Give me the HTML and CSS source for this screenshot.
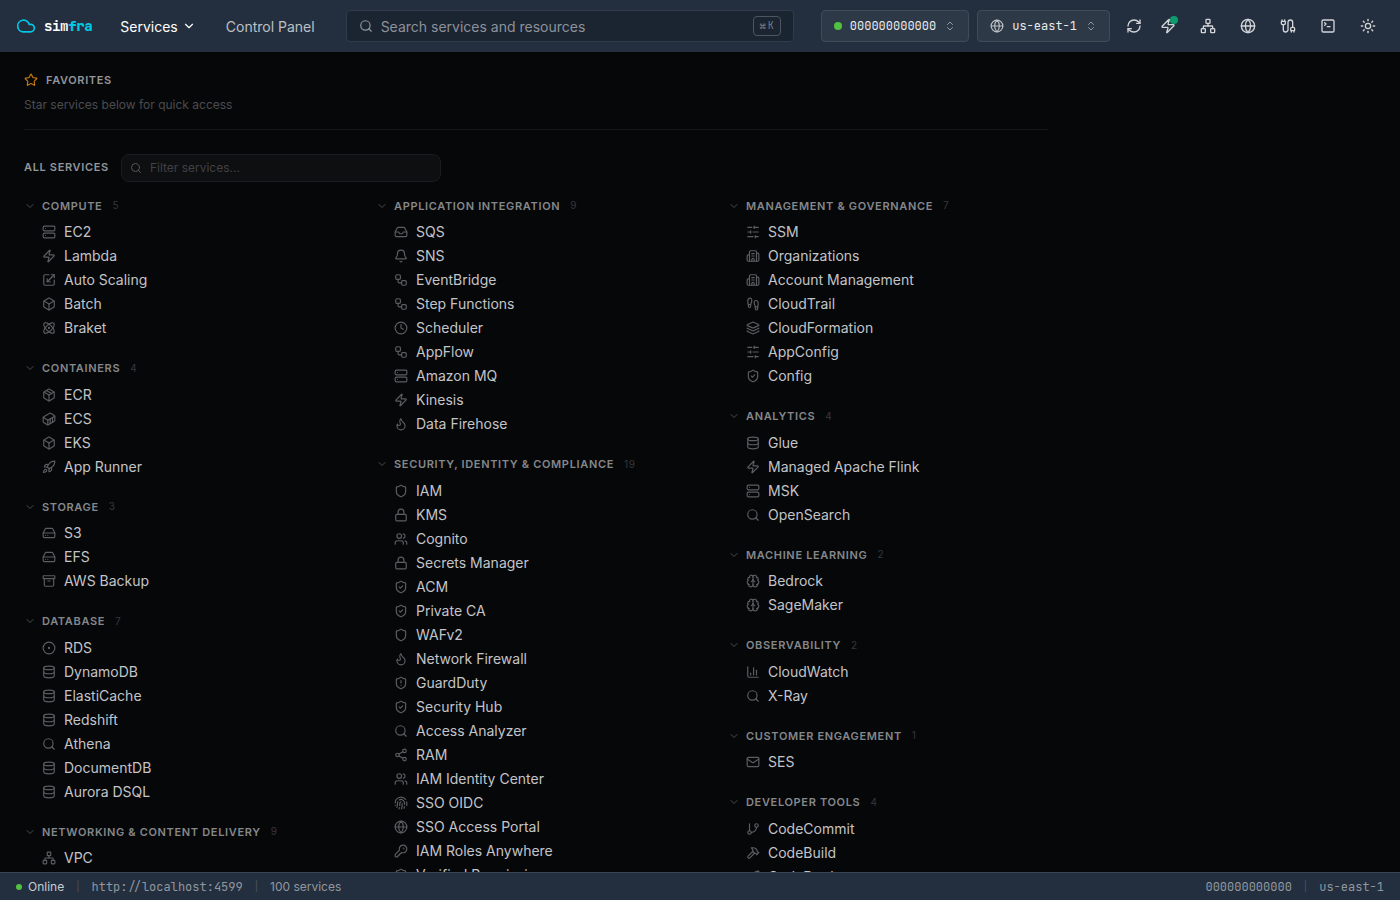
FILE: index.html
```html
<!DOCTYPE html>
<html lang="en">
<head>
<meta charset="UTF-8">
<meta name="viewport" content="width=device-width, initial-scale=1.0">
<title>simfra - Services</title>
<link rel="stylesheet" href="styles.css">
</head>
<body>
    <!-- icon sprite -->
    <svg class="sprite" aria-hidden="true">
        <symbol id="cloud" viewBox="0 0 24 24"><path d="M17.5 19H9a7 7 0 1 1 6.71-9h1.79a4.5 4.5 0 1 1 0 9Z"/></symbol>
        <symbol id="star" viewBox="0 0 24 24"><path d="M11.525 2.295a.53.53 0 0 1 .95 0l2.31 4.679a2.123 2.123 0 0 0 1.595 1.16l5.166.756a.53.53 0 0 1 .294.904l-3.736 3.638a2.123 2.123 0 0 0-.611 1.878l.882 5.14a.53.53 0 0 1-.771.56l-4.618-2.428a2.122 2.122 0 0 0-1.973 0L6.396 21.01a.53.53 0 0 1-.77-.56l.881-5.139a2.122 2.122 0 0 0-.611-1.879L2.16 9.795a.53.53 0 0 1 .294-.906l5.165-.755a2.122 2.122 0 0 0 1.597-1.16z"/></symbol>
        <symbol id="chevron" viewBox="0 0 24 24"><path d="m6 9 6 6 6-6"/></symbol>
        <symbol id="up-down" viewBox="0 0 24 24"><path d="m7 15 5 5 5-5"/><path d="m7 9 5-5 5 5"/></symbol>
        <symbol id="search" viewBox="0 0 24 24"><circle cx="11" cy="11" r="8"/><path d="m21 21-4.3-4.3"/></symbol>
        <symbol id="globe" viewBox="0 0 24 24"><circle cx="12" cy="12" r="10"/><path d="M12 2a14.5 14.5 0 0 0 0 20 14.5 14.5 0 0 0 0-20"/><path d="M2 12h20"/></symbol>
        <symbol id="refresh" viewBox="0 0 24 24"><path d="M3 12a9 9 0 0 1 9-9 9.75 9.75 0 0 1 6.74 2.74L21 8"/><path d="M21 3v5h-5"/><path d="M21 12a9 9 0 0 1-9 9 9.75 9.75 0 0 1-6.74-2.74L3 16"/><path d="M8 16H3v5"/></symbol>
        <symbol id="zap" viewBox="0 0 24 24"><path d="M4 14a1 1 0 0 1-.78-1.63l9.9-10.2a.5.5 0 0 1 .86.46l-1.92 6.02A1 1 0 0 0 13 10h7a1 1 0 0 1 .78 1.63l-9.9 10.2a.5.5 0 0 1-.86-.46l1.92-6.02A1 1 0 0 0 11 14z"/></symbol>
        <symbol id="network" viewBox="0 0 24 24"><rect x="16" y="16" width="6" height="6" rx="1"/><rect x="2" y="16" width="6" height="6" rx="1"/><rect x="9" y="2" width="6" height="6" rx="1"/><path d="M5 16v-3a1 1 0 0 1 1-1h12a1 1 0 0 1 1 1v3"/><path d="M12 12V8"/></symbol>
        <symbol id="cable" viewBox="0 0 24 24"><path d="M17 19a1 1 0 0 1-1-1v-2a2 2 0 0 1 2-2h2a2 2 0 0 1 2 2v2a1 1 0 0 1-1 1z"/><path d="M17 21v-2"/><path d="M19 14V6.5a1 1 0 0 0-7 0v11a1 1 0 0 1-7 0V10"/><path d="M21 21v-2"/><path d="M3 5V3"/><path d="M4 10a2 2 0 0 1-2-2V6a1 1 0 0 1 1-1h4a1 1 0 0 1 1 1v2a2 2 0 0 1-2 2z"/><path d="M7 5V3"/></symbol>
        <symbol id="terminal" viewBox="0 0 24 24"><path d="m7 11 2-2-2-2"/><path d="M11 13h4"/><rect x="3" y="3" width="18" height="18" rx="2"/></symbol>
        <symbol id="sun" viewBox="0 0 24 24"><circle cx="12" cy="12" r="4"/><path d="M12 2v2"/><path d="M12 20v2"/><path d="m4.93 4.93 1.41 1.41"/><path d="m17.66 17.66 1.41 1.41"/><path d="M2 12h2"/><path d="M20 12h2"/><path d="m6.34 17.66-1.41 1.41"/><path d="m19.07 4.93-1.41 1.41"/></symbol>
        <symbol id="server" viewBox="0 0 24 24"><rect x="2" y="2" width="20" height="8" rx="2"/><rect x="2" y="14" width="20" height="8" rx="2"/><path d="M6 6h.01"/><path d="M6 18h.01"/></symbol>
        <symbol id="scaling" viewBox="0 0 24 24"><path d="M12 3H5a2 2 0 0 0-2 2v14a2 2 0 0 0 2 2h14a2 2 0 0 0 2-2v-7"/><path d="M14 15H9v-5"/><path d="M16 3h5v5"/><path d="M21 3 9 15"/></symbol>
        <symbol id="box" viewBox="0 0 24 24"><path d="M21 8a2 2 0 0 0-1-1.73l-7-4a2 2 0 0 0-2 0l-7 4A2 2 0 0 0 3 8v8a2 2 0 0 0 1 1.73l7 4a2 2 0 0 0 2 0l7-4A2 2 0 0 0 21 16Z"/><path d="m3.3 7 8.7 5 8.7-5"/><path d="M12 22V12"/></symbol>
        <symbol id="package" viewBox="0 0 24 24"><path d="M11 21.73a2 2 0 0 0 2 0l7-4A2 2 0 0 0 21 16V8a2 2 0 0 0-1-1.73l-7-4a2 2 0 0 0-2 0l-7 4A2 2 0 0 0 3 8v8a2 2 0 0 0 1 1.73z"/><path d="M12 22V12"/><path d="M3.29 7 12 12l8.71-5"/><path d="m7.5 4.27 9 5.15"/></symbol>
        <symbol id="atom" viewBox="0 0 24 24"><circle cx="12" cy="12" r="1"/><path d="M20.2 20.2c2.04-2.03.02-7.36-4.5-11.9-4.54-4.52-9.87-6.54-11.9-4.5-2.04 2.03-.02 7.36 4.5 11.9 4.54 4.52 9.87 6.54 11.9 4.5Z"/><path d="M15.7 15.7c4.52-4.54 6.54-9.87 4.5-11.9-2.03-2.04-7.36-.02-11.9 4.5-4.52 4.54-6.54 9.87-4.5 11.9 2.03 2.04 7.36.02 11.9-4.5Z"/></symbol>
        <symbol id="container" viewBox="0 0 24 24"><path d="M22 7.7c0-.6-.4-1.2-.8-1.5l-6.3-3.9a1.72 1.72 0 0 0-1.7 0l-10.3 6c-.5.2-.9.8-.9 1.4v6.6c0 .5.4 1.2.8 1.5l6.3 3.9a1.72 1.72 0 0 0 1.7 0l10.3-6c.5-.3.9-1 .9-1.5Z"/><path d="M10 21.9V14L2.1 9.1"/><path d="m10 14 11.9-6.9"/><path d="M14 19.8v-8.1"/><path d="M18 17.5V9.4"/></symbol>
        <symbol id="rocket" viewBox="0 0 24 24"><path d="M4.5 16.5c-1.5 1.26-2 5-2 5s3.74-.5 5-2c.71-.84.7-2.13-.09-2.91a2.18 2.18 0 0 0-2.91-.09z"/><path d="m12 15-3-3a22 22 0 0 1 2-3.95A12.88 12.88 0 0 1 22 2c0 2.72-.78 7.5-6 11a22.35 22.35 0 0 1-4 2z"/><path d="M9 12H4s.55-3.03 2-4c1.62-1.08 5 0 5 0"/><path d="M12 15v5s3.03-.55 4-2c1.08-1.62 0-5 0-5"/></symbol>
        <symbol id="drive" viewBox="0 0 24 24"><path d="M22 12H2"/><path d="M5.45 5.11 2 12v6a2 2 0 0 0 2 2h16a2 2 0 0 0 2-2v-6l-3.45-6.89A2 2 0 0 0 16.76 4H7.24a2 2 0 0 0-1.79 1.11z"/><path d="M6 16h.01"/><path d="M10 16h.01"/></symbol>
        <symbol id="archive" viewBox="0 0 24 24"><rect x="2" y="3" width="20" height="5" rx="1"/><path d="M4 8v11a2 2 0 0 0 2 2h12a2 2 0 0 0 2-2V8"/><path d="M10 12h4"/></symbol>
        <symbol id="circle-dot" viewBox="0 0 24 24"><circle cx="12" cy="12" r="10"/><circle cx="12" cy="12" r="1"/></symbol>
        <symbol id="database" viewBox="0 0 24 24"><ellipse cx="12" cy="5" rx="9" ry="3"/><path d="M3 5V19A9 3 0 0 0 21 19V5"/><path d="M3 12A9 3 0 0 0 21 12"/></symbol>
        <symbol id="inbox" viewBox="0 0 24 24"><path d="M22 12h-6l-2 3h-4l-2-3H2"/><path d="M5.45 5.11 2 12v6a2 2 0 0 0 2 2h16a2 2 0 0 0 2-2v-6l-3.45-6.89A2 2 0 0 0 16.76 4H7.24a2 2 0 0 0-1.79 1.11z"/></symbol>
        <symbol id="bell" viewBox="0 0 24 24"><path d="M10.268 21a2 2 0 0 0 3.464 0"/><path d="M3.262 15.326A1 1 0 0 0 4 17h16a1 1 0 0 0 .74-1.673C19.41 13.956 18 12.499 18 8A6 6 0 0 0 6 8c0 4.499-1.411 5.956-2.738 7.326"/></symbol>
        <symbol id="workflow" viewBox="0 0 24 24"><rect x="3" y="3" width="8" height="8" rx="2"/><path d="M7 11v4a2 2 0 0 0 2 2h4"/><rect x="13" y="13" width="8" height="8" rx="2"/></symbol>
        <symbol id="clock" viewBox="0 0 24 24"><circle cx="12" cy="12" r="10"/><path d="M12 6v6l4 2"/></symbol>
        <symbol id="flame" viewBox="0 0 24 24"><path d="M8.5 14.5A2.5 2.5 0 0 0 11 12c0-1.38-.5-2-1-3-1.072-2.143-.224-4.054 2-6 .5 2.5 2 4.9 4 6.5 2 1.6 3 3.5 3 5.5a7 7 0 1 1-14 0c0-1.153.433-2.294 1-3a2.5 2.5 0 0 0 2.5 2.5z"/></symbol>
        <symbol id="shield" viewBox="0 0 24 24"><path d="M20 13c0 5-3.5 7.5-7.66 8.95a1 1 0 0 1-.67-.01C7.5 20.5 4 18 4 13V6a1 1 0 0 1 1-1c2 0 4.5-1.2 6.24-2.72a1.17 1.17 0 0 1 1.52 0C14.51 3.81 17 5 19 5a1 1 0 0 1 1 1z"/></symbol>
        <symbol id="shield-check" viewBox="0 0 24 24"><path d="M20 13c0 5-3.5 7.5-7.66 8.95a1 1 0 0 1-.67-.01C7.5 20.5 4 18 4 13V6a1 1 0 0 1 1-1c2 0 4.5-1.2 6.24-2.72a1.17 1.17 0 0 1 1.52 0C14.51 3.81 17 5 19 5a1 1 0 0 1 1 1z"/><path d="m9 12 2 2 4-4"/></symbol>
        <symbol id="shield-alert" viewBox="0 0 24 24"><path d="M20 13c0 5-3.5 7.5-7.66 8.95a1 1 0 0 1-.67-.01C7.5 20.5 4 18 4 13V6a1 1 0 0 1 1-1c2 0 4.5-1.2 6.24-2.72a1.17 1.17 0 0 1 1.52 0C14.51 3.81 17 5 19 5a1 1 0 0 1 1 1z"/><path d="M12 8v4"/><path d="M12 16h.01"/></symbol>
        <symbol id="lock" viewBox="0 0 24 24"><rect x="3" y="11" width="18" height="11" rx="2"/><path d="M7 11V7a5 5 0 0 1 10 0v4"/></symbol>
        <symbol id="users" viewBox="0 0 24 24"><path d="M16 21v-2a4 4 0 0 0-4-4H6a4 4 0 0 0-4 4v2"/><path d="M16 3.128a4 4 0 0 1 0 7.744"/><path d="M22 21v-2a4 4 0 0 0-3-3.87"/><circle cx="9" cy="7" r="4"/></symbol>
        <symbol id="share" viewBox="0 0 24 24"><circle cx="18" cy="5" r="3"/><circle cx="6" cy="12" r="3"/><circle cx="18" cy="19" r="3"/><path d="m8.59 13.51 6.83 3.98"/><path d="m15.41 6.51-6.82 3.98"/></symbol>
        <symbol id="fingerprint" viewBox="0 0 24 24"><path d="M12 10a2 2 0 0 0-2 2c0 1.02-.1 2.51-.26 4"/><path d="M14 13.12c0 2.38 0 6.38-1 8.88"/><path d="M17.29 21.02c.12-.6.43-2.3.5-3.02"/><path d="M2 12a10 10 0 0 1 18-6"/><path d="M2 16h.01"/><path d="M21.8 16c.2-2 .131-5.354 0-6"/><path d="M5 19.5C5.5 18 6 15 6 12a6 6 0 0 1 .34-2"/><path d="M8.65 22c.21-.66.45-1.32.57-2"/><path d="M9 6.8a6 6 0 0 1 9 5.2v2"/></symbol>
        <symbol id="key" viewBox="0 0 24 24"><path d="M2.586 17.414A2 2 0 0 0 2 18.828V21a1 1 0 0 0 1 1h3a1 1 0 0 0 1-1v-1a1 1 0 0 1 1-1h1a1 1 0 0 0 1-1v-1a1 1 0 0 1 1-1h.172a2 2 0 0 0 1.414-.586l.814-.814a6.5 6.5 0 1 0-4-4z"/><circle cx="16.5" cy="7.5" r=".5"/></symbol>
        <symbol id="sliders" viewBox="0 0 24 24"><path d="M21 4h-7"/><path d="M10 4H3"/><path d="M21 12h-9"/><path d="M8 12H3"/><path d="M21 20h-5"/><path d="M12 20H3"/><path d="M14 2v4"/><path d="M8 10v4"/><path d="M16 18v4"/></symbol>
        <symbol id="building" viewBox="0 0 24 24"><path d="M10 12h4"/><path d="M10 8h4"/><path d="M14 21v-3a2 2 0 0 0-4 0v3"/><path d="M6 10H4a2 2 0 0 0-2 2v7a2 2 0 0 0 2 2h16a2 2 0 0 0 2-2V9a2 2 0 0 0-2-2h-2"/><path d="M6 21V5a2 2 0 0 1 2-2h8a2 2 0 0 1 2 2v16"/></symbol>
        <symbol id="footprints" viewBox="0 0 24 24"><path d="M4 16v-2.38C4 11.5 2.97 10.5 3 8c.03-2.72 1.49-6 4.5-6C9.37 2 10 3.8 10 5.5c0 3.11-2 5.66-2 8.68V16a2 2 0 1 1-4 0Z"/><path d="M20 20v-2.38c0-2.12 1.03-3.12 1-5.62-.03-2.72-1.49-6-4.5-6C14.63 6 14 7.8 14 9.5c0 3.11 2 5.66 2 8.68V20a2 2 0 1 0 4 0Z"/><path d="M16 17h4"/><path d="M4 13h4"/></symbol>
        <symbol id="layers" viewBox="0 0 24 24"><path d="M12.83 2.18a2 2 0 0 0-1.66 0L2.6 6.08a1 1 0 0 0 0 1.83l8.58 3.91a2 2 0 0 0 1.66 0l8.58-3.9a1 1 0 0 0 0-1.83z"/><path d="M2 12a1 1 0 0 0 .58.91l8.6 3.91a2 2 0 0 0 1.65 0l8.58-3.9A1 1 0 0 0 22 12"/><path d="M2 17a1 1 0 0 0 .58.91l8.6 3.91a2 2 0 0 0 1.65 0l8.58-3.9A1 1 0 0 0 22 17"/></symbol>
        <symbol id="brain" viewBox="0 0 24 24"><path d="M12 18V5"/><path d="M15 13a4.17 4.17 0 0 1-3-4 4.17 4.17 0 0 1-3 4"/><path d="M17.598 6.5A3 3 0 1 0 12 5a3 3 0 1 0-5.598 1.5"/><path d="M17.997 5.125a4 4 0 0 1 2.526 5.77"/><path d="M18 18a4 4 0 0 0 2-7.464"/><path d="M19.967 17.483A4 4 0 1 1 12 18a4 4 0 1 1-7.967-.517"/><path d="M6 18a4 4 0 0 1-2-7.464"/><path d="M6.003 5.125a4 4 0 0 0-2.526 5.77"/></symbol>
        <symbol id="chart" viewBox="0 0 24 24"><path d="M3 3v16a2 2 0 0 0 2 2h16"/><path d="M18 17V9"/><path d="M13 17V5"/><path d="M8 17v-3"/></symbol>
        <symbol id="mail" viewBox="0 0 24 24"><path d="m22 7-8.991 5.727a2 2 0 0 1-2.009 0L2 7"/><rect x="2" y="4" width="20" height="16" rx="2"/></symbol>
        <symbol id="git-branch" viewBox="0 0 24 24"><path d="M6 3v12"/><circle cx="18" cy="6" r="3"/><circle cx="6" cy="18" r="3"/><path d="M18 9a9 9 0 0 1-9 9"/></symbol>
        <symbol id="hammer" viewBox="0 0 24 24"><path d="m15 12-8.373 8.373a1 1 0 1 1-3-3L12 9"/><path d="m18 15 4-4"/><path d="m21.5 11.5-1.914-1.914A2 2 0 0 1 19 8.172V7l-2.26-2.26a6 6 0 0 0-4.202-1.756L9 2.96l.92.82A6.18 6.18 0 0 1 12 8.4V10l2 2h1.172a2 2 0 0 1 1.414.586L18.5 14.5"/></symbol>
    </svg>

    <header class="topbar">
        <a class="logo" href="#"><svg class="icon icon-20"><use href="#cloud"/></svg><span>sim<b>fra</b></span></a>
        <nav class="nav">
            <button class="nav-item active" type="button">Services <svg class="icon icon-14"><use href="#chevron"/></svg></button>
            <a class="nav-item" href="#">Control Panel</a>
        </nav>
        <div class="search">
            <svg class="icon icon-14"><use href="#search"/></svg>
            <input type="search" placeholder="Search services and resources" aria-label="Search services and resources">
            <kbd><span>⌘</span><span>K</span></kbd>
        </div>
        <div class="tools">
            <div class="pickers">
                <button class="picker" type="button"><span class="dot"></span>000000000000 <svg class="icon icon-12"><use href="#up-down"/></svg></button>
                <button class="picker" type="button"><svg class="icon icon-14 picker-icon"><use href="#globe"/></svg>us-east-1 <svg class="icon icon-12"><use href="#up-down"/></svg></button>
                <button class="icon-btn" type="button" aria-label="Refresh"><svg class="icon icon-16"><use href="#refresh"/></svg></button>
            </div>
            <div class="actions">
                <button class="icon-btn" type="button" aria-label="Events"><svg class="icon icon-16"><use href="#zap"/></svg><span class="badge"></span></button>
                <button class="icon-btn" type="button" aria-label="Topology"><svg class="icon icon-16"><use href="#network"/></svg></button>
                <button class="icon-btn" type="button" aria-label="Endpoints"><svg class="icon icon-16"><use href="#globe"/></svg></button>
                <button class="icon-btn" type="button" aria-label="Connections"><svg class="icon icon-16"><use href="#cable"/></svg></button>
                <button class="icon-btn" type="button" aria-label="Terminal"><svg class="icon icon-16"><use href="#terminal"/></svg></button>
                <button class="icon-btn" type="button" aria-label="Theme"><svg class="icon icon-16"><use href="#sun"/></svg></button>
            </div>
        </div>
    </header>

    <main class="content">
        <div class="inner">
            <section class="favorites">
                <h2 class="title"><svg class="icon icon-14 star"><use href="#star"/></svg>Favorites</h2>
                <p>Star services below for quick access</p>
            </section>

            <div class="filter-row">
                <h2 class="title">All services</h2>
                <div class="filter">
                    <svg class="icon icon-12"><use href="#search"/></svg>
                    <input type="text" placeholder="Filter services..." aria-label="Filter services">
                </div>
            </div>

            <div class="columns">
                <div class="column">
                    <section class="group">
                        <button class="group-head" type="button"><svg class="icon icon-12"><use href="#chevron"/></svg>Compute <span class="count">5</span></button>
                        <ul>
                            <li><a href="#"><svg class="icon icon-14"><use href="#server"/></svg>EC2</a></li>
                            <li><a href="#"><svg class="icon icon-14"><use href="#zap"/></svg>Lambda</a></li>
                            <li><a href="#"><svg class="icon icon-14"><use href="#scaling"/></svg>Auto Scaling</a></li>
                            <li><a href="#"><svg class="icon icon-14"><use href="#box"/></svg>Batch</a></li>
                            <li><a href="#"><svg class="icon icon-14"><use href="#atom"/></svg>Braket</a></li>
                        </ul>
                    </section>
                    <section class="group">
                        <button class="group-head" type="button"><svg class="icon icon-12"><use href="#chevron"/></svg>Containers <span class="count">4</span></button>
                        <ul>
                            <li><a href="#"><svg class="icon icon-14"><use href="#package"/></svg>ECR</a></li>
                            <li><a href="#"><svg class="icon icon-14"><use href="#container"/></svg>ECS</a></li>
                            <li><a href="#"><svg class="icon icon-14"><use href="#box"/></svg>EKS</a></li>
                            <li><a href="#"><svg class="icon icon-14"><use href="#rocket"/></svg>App Runner</a></li>
                        </ul>
                    </section>
                    <section class="group">
                        <button class="group-head" type="button"><svg class="icon icon-12"><use href="#chevron"/></svg>Storage <span class="count">3</span></button>
                        <ul>
                            <li><a href="#"><svg class="icon icon-14"><use href="#drive"/></svg>S3</a></li>
                            <li><a href="#"><svg class="icon icon-14"><use href="#drive"/></svg>EFS</a></li>
                            <li><a href="#"><svg class="icon icon-14"><use href="#archive"/></svg>AWS Backup</a></li>
                        </ul>
                    </section>
                    <section class="group">
                        <button class="group-head" type="button"><svg class="icon icon-12"><use href="#chevron"/></svg>Database <span class="count">7</span></button>
                        <ul>
                            <li><a href="#"><svg class="icon icon-14"><use href="#circle-dot"/></svg>RDS</a></li>
                            <li><a href="#"><svg class="icon icon-14"><use href="#database"/></svg>DynamoDB</a></li>
                            <li><a href="#"><svg class="icon icon-14"><use href="#database"/></svg>ElastiCache</a></li>
                            <li><a href="#"><svg class="icon icon-14"><use href="#database"/></svg>Redshift</a></li>
                            <li><a href="#"><svg class="icon icon-14"><use href="#search"/></svg>Athena</a></li>
                            <li><a href="#"><svg class="icon icon-14"><use href="#database"/></svg>DocumentDB</a></li>
                            <li><a href="#"><svg class="icon icon-14"><use href="#database"/></svg>Aurora DSQL</a></li>
                        </ul>
                    </section>
                    <section class="group">
                        <button class="group-head" type="button"><svg class="icon icon-12"><use href="#chevron"/></svg>Networking &amp; Content Delivery <span class="count">9</span></button>
                        <ul>
                            <li><a href="#"><svg class="icon icon-14"><use href="#network"/></svg>VPC</a></li>
                        </ul>
                    </section>
                </div>

                <div class="column">
                    <section class="group">
                        <button class="group-head" type="button"><svg class="icon icon-12"><use href="#chevron"/></svg>Application Integration <span class="count">9</span></button>
                        <ul>
                            <li><a href="#"><svg class="icon icon-14"><use href="#inbox"/></svg>SQS</a></li>
                            <li><a href="#"><svg class="icon icon-14"><use href="#bell"/></svg>SNS</a></li>
                            <li><a href="#"><svg class="icon icon-14"><use href="#workflow"/></svg>EventBridge</a></li>
                            <li><a href="#"><svg class="icon icon-14"><use href="#workflow"/></svg>Step Functions</a></li>
                            <li><a href="#"><svg class="icon icon-14"><use href="#clock"/></svg>Scheduler</a></li>
                            <li><a href="#"><svg class="icon icon-14"><use href="#workflow"/></svg>AppFlow</a></li>
                            <li><a href="#"><svg class="icon icon-14"><use href="#server"/></svg>Amazon MQ</a></li>
                            <li><a href="#"><svg class="icon icon-14"><use href="#zap"/></svg>Kinesis</a></li>
                            <li><a href="#"><svg class="icon icon-14"><use href="#flame"/></svg>Data Firehose</a></li>
                        </ul>
                    </section>
                    <section class="group">
                        <button class="group-head" type="button"><svg class="icon icon-12"><use href="#chevron"/></svg>Security, Identity &amp; Compliance <span class="count">19</span></button>
                        <ul>
                            <li><a href="#"><svg class="icon icon-14"><use href="#shield"/></svg>IAM</a></li>
                            <li><a href="#"><svg class="icon icon-14"><use href="#lock"/></svg>KMS</a></li>
                            <li><a href="#"><svg class="icon icon-14"><use href="#users"/></svg>Cognito</a></li>
                            <li><a href="#"><svg class="icon icon-14"><use href="#lock"/></svg>Secrets Manager</a></li>
                            <li><a href="#"><svg class="icon icon-14"><use href="#shield-check"/></svg>ACM</a></li>
                            <li><a href="#"><svg class="icon icon-14"><use href="#shield-check"/></svg>Private CA</a></li>
                            <li><a href="#"><svg class="icon icon-14"><use href="#shield"/></svg>WAFv2</a></li>
                            <li><a href="#"><svg class="icon icon-14"><use href="#flame"/></svg>Network Firewall</a></li>
                            <li><a href="#"><svg class="icon icon-14"><use href="#shield-alert"/></svg>GuardDuty</a></li>
                            <li><a href="#"><svg class="icon icon-14"><use href="#shield-check"/></svg>Security Hub</a></li>
                            <li><a href="#"><svg class="icon icon-14"><use href="#search"/></svg>Access Analyzer</a></li>
                            <li><a href="#"><svg class="icon icon-14"><use href="#share"/></svg>RAM</a></li>
                            <li><a href="#"><svg class="icon icon-14"><use href="#users"/></svg>IAM Identity Center</a></li>
                            <li><a href="#"><svg class="icon icon-14"><use href="#fingerprint"/></svg>SSO OIDC</a></li>
                            <li><a href="#"><svg class="icon icon-14"><use href="#globe"/></svg>SSO Access Portal</a></li>
                            <li><a href="#"><svg class="icon icon-14"><use href="#key"/></svg>IAM Roles Anywhere</a></li>
                            <li><a href="#"><svg class="icon icon-14"><use href="#shield-check"/></svg>Verified Permissions</a></li>
                        </ul>
                    </section>
                </div>

                <div class="column">
                    <section class="group">
                        <button class="group-head" type="button"><svg class="icon icon-12"><use href="#chevron"/></svg>Management &amp; Governance <span class="count">7</span></button>
                        <ul>
                            <li><a href="#"><svg class="icon icon-14"><use href="#sliders"/></svg>SSM</a></li>
                            <li><a href="#"><svg class="icon icon-14"><use href="#building"/></svg>Organizations</a></li>
                            <li><a href="#"><svg class="icon icon-14"><use href="#building"/></svg>Account Management</a></li>
                            <li><a href="#"><svg class="icon icon-14"><use href="#footprints"/></svg>CloudTrail</a></li>
                            <li><a href="#"><svg class="icon icon-14"><use href="#layers"/></svg>CloudFormation</a></li>
                            <li><a href="#"><svg class="icon icon-14"><use href="#sliders"/></svg>AppConfig</a></li>
                            <li><a href="#"><svg class="icon icon-14"><use href="#shield-check"/></svg>Config</a></li>
                        </ul>
                    </section>
                    <section class="group">
                        <button class="group-head" type="button"><svg class="icon icon-12"><use href="#chevron"/></svg>Analytics <span class="count">4</span></button>
                        <ul>
                            <li><a href="#"><svg class="icon icon-14"><use href="#database"/></svg>Glue</a></li>
                            <li><a href="#"><svg class="icon icon-14"><use href="#zap"/></svg>Managed Apache Flink</a></li>
                            <li><a href="#"><svg class="icon icon-14"><use href="#server"/></svg>MSK</a></li>
                            <li><a href="#"><svg class="icon icon-14"><use href="#search"/></svg>OpenSearch</a></li>
                        </ul>
                    </section>
                    <section class="group">
                        <button class="group-head" type="button"><svg class="icon icon-12"><use href="#chevron"/></svg>Machine Learning <span class="count">2</span></button>
                        <ul>
                            <li><a href="#"><svg class="icon icon-14"><use href="#brain"/></svg>Bedrock</a></li>
                            <li><a href="#"><svg class="icon icon-14"><use href="#brain"/></svg>SageMaker</a></li>
                        </ul>
                    </section>
                    <section class="group">
                        <button class="group-head" type="button"><svg class="icon icon-12"><use href="#chevron"/></svg>Observability <span class="count">2</span></button>
                        <ul>
                            <li><a href="#"><svg class="icon icon-14"><use href="#chart"/></svg>CloudWatch</a></li>
                            <li><a href="#"><svg class="icon icon-14"><use href="#search"/></svg>X-Ray</a></li>
                        </ul>
                    </section>
                    <section class="group">
                        <button class="group-head" type="button"><svg class="icon icon-12"><use href="#chevron"/></svg>Customer Engagement <span class="count">1</span></button>
                        <ul>
                            <li><a href="#"><svg class="icon icon-14"><use href="#mail"/></svg>SES</a></li>
                        </ul>
                    </section>
                    <section class="group">
                        <button class="group-head" type="button"><svg class="icon icon-12"><use href="#chevron"/></svg>Developer Tools <span class="count">4</span></button>
                        <ul>
                            <li><a href="#"><svg class="icon icon-14"><use href="#git-branch"/></svg>CodeCommit</a></li>
                            <li><a href="#"><svg class="icon icon-14"><use href="#hammer"/></svg>CodeBuild</a></li>
                            <li><a href="#"><svg class="icon icon-14"><use href="#rocket"/></svg>CodeDeploy</a></li>
                        </ul>
                    </section>
                </div>
            </div>
        </div>
    </main>

    <footer class="statusbar">
        <span class="online"><span class="dot"></span>Online</span>
        <span class="sep">|</span>
        <span class="mono">http://localhost:4599</span>
        <span class="sep">|</span>
        <span>100 services</span>
        <span class="mono push">000000000000</span>
        <span class="sep">|</span>
        <span class="mono">us-east-1</span>
    </footer>
</body>
</html>
```
FILE: styles.css
```css
* {
    box-sizing: border-box;
}
body {
    margin: 0;
    height: 100vh;
    display: flex;
    flex-direction: column;
    overflow: hidden;
    background: #060709;
    color: #c3c4c7;
    font-family: Inter, "Liberation Sans", sans-serif;
    font-size: 14px;
    line-height: 1.5;
}
h2, p, ul {
    margin: 0;
    padding: 0;
}
ul {
    list-style: none;
}
a {
    color: inherit;
    text-decoration: none;
}
button, input {
    font: inherit;
    color: inherit;
    background: none;
    border: 0;
    padding: 0;
}
button {
    cursor: pointer;
}
input:focus {
    outline: none;
}

/* icons */
.sprite {
    display: none;
}
.icon {
    flex: none;
    fill: none;
    stroke: currentColor;
    stroke-width: 2;
    stroke-linecap: round;
    stroke-linejoin: round;
}
.icon-12 { width: 12px; height: 12px; }
.icon-14 { width: 14px; height: 14px; }
.icon-16 { width: 16px; height: 16px; }
.icon-20 { width: 20px; height: 20px; }

.mono, .logo, .picker, kbd {
    font-family: "JetBrains Mono", "Liberation Mono", monospace;
}
.dot {
    flex: none;
    width: 8px;
    height: 8px;
    border-radius: 50%;
    background: #52c041;
}

/* top bar */
.topbar {
    flex: none;
    display: flex;
    align-items: center;
    height: 52px;
    padding: 0 16px;
    background: #232f3e;
}
.logo {
    display: flex;
    align-items: center;
    gap: 8px;
    font-weight: 700;
    letter-spacing: -0.025em;
    color: #fff;
}
.logo .icon {
    color: #00c8e6;
}
.logo b {
    color: #00c8e6;
}
.nav {
    display: flex;
    gap: 6px;
    margin-left: 16px;
}
.nav-item {
    display: flex;
    align-items: center;
    gap: 4px;
    padding: 0 12px;
    color: #bdc1c5;
    white-space: nowrap;
}
.nav-item.active {
    color: #fff;
}
.search {
    flex: 1;
    max-width: 448px;
    height: 32px;
    margin: 0 19px;
    padding: 0 12px;
    display: flex;
    align-items: center;
    gap: 8px;
    background: #1b2431;
    border: 1px solid #313b49;
    border-radius: 4px;
    color: #9398a0;
}
.search input {
    flex: 1;
    min-width: 0;
}
.search input::placeholder {
    color: #8d929a;
    opacity: 1;
}
kbd {
    display: flex;
    gap: 2px;
    padding: 0 6px;
    border: 1px solid #4d5561;
    border-radius: 4px;
    font-size: 10px;
    line-height: 18px;
    color: #727983;
}
.tools {
    display: flex;
    gap: 2px;
    margin-left: auto;
}
.pickers, .actions {
    display: flex;
    gap: 8px;
}
.picker {
    display: flex;
    align-items: center;
    gap: 8px;
    height: 32px;
    padding: 0 12px;
    background: #2e3947;
    border: 1px solid #414b58;
    border-radius: 4px;
    font-size: 12px;
    color: #e9eaec;
    white-space: nowrap;
}
.picker .icon {
    color: #91979f;
}
.picker .picker-icon {
    color: #bdc1c5;
}
.icon-btn {
    position: relative;
    display: flex;
    align-items: center;
    justify-content: center;
    width: 32px;
    height: 32px;
    color: #d3d5d8;
}
.badge {
    position: absolute;
    top: 6px;
    right: 6px;
    width: 8px;
    height: 8px;
    border-radius: 50%;
    background: #0f9b70;
}

/* services */
.content {
    flex: 1;
    min-height: 0;
    overflow-y: auto;
    scrollbar-width: none;
    padding: 20px 24px;
}
.inner {
    max-width: 1024px;
}
.title {
    display: flex;
    align-items: center;
    gap: 8px;
    font-size: 11px;
    font-weight: 600;
    letter-spacing: 0.06em;
    text-transform: uppercase;
    color: #93959a;
}
.star {
    color: #c47a0c;
}
.favorites {
    padding-bottom: 15px;
    border-bottom: 1px solid #17181a;
}
.favorites p {
    margin-top: 7px;
    font-size: 12px;
    color: #4b4c4f;
}
.filter-row {
    display: flex;
    align-items: center;
    gap: 12px;
    margin: 24px 0 16px;
}
.filter {
    display: flex;
    align-items: center;
    gap: 8px;
    width: 320px;
    height: 28px;
    padding: 0 8px;
    background: #0e0f11;
    border: 1px solid #1b1c1f;
    border-radius: 8px;
    font-size: 12px;
    color: #55575a;
}
.filter input {
    flex: 1;
    min-width: 0;
}
.filter input::placeholder {
    color: #404144;
    opacity: 1;
}
.columns {
    display: grid;
    grid-template-columns: repeat(3, 1fr);
    gap: 32px;
}
.group {
    margin-bottom: 20px;
}
.group-head {
    display: flex;
    align-items: center;
    gap: 6px;
    margin-bottom: 6px;
    font-size: 11px;
    font-weight: 600;
    letter-spacing: 0.06em;
    text-transform: uppercase;
    color: #85878b;
}
.group-head .icon {
    color: #4b4c4f;
}
.count {
    margin-left: 4px;
    font-size: 10px;
    font-weight: 400;
    color: #37383b;
}
.group li a {
    display: flex;
    align-items: center;
    gap: 8px;
    height: 24px;
    padding-left: 18px;
    line-height: 20px;
}
.group li .icon {
    color: #5c5e61;
}

/* status bar */
.statusbar {
    flex: none;
    display: flex;
    align-items: center;
    gap: 12px;
    height: 28px;
    padding: 0 16px;
    background: #232f3e;
    border-top: 1px solid #3b4653;
    font-size: 12px;
    color: #91979f;
}
.online {
    display: flex;
    align-items: center;
    gap: 6px;
    color: #c9ccd0;
}
.online .dot {
    width: 6px;
    height: 6px;
}
.sep {
    font-size: 10px;
    color: #4d5561;
}
.push {
    margin-left: auto;
}
```
